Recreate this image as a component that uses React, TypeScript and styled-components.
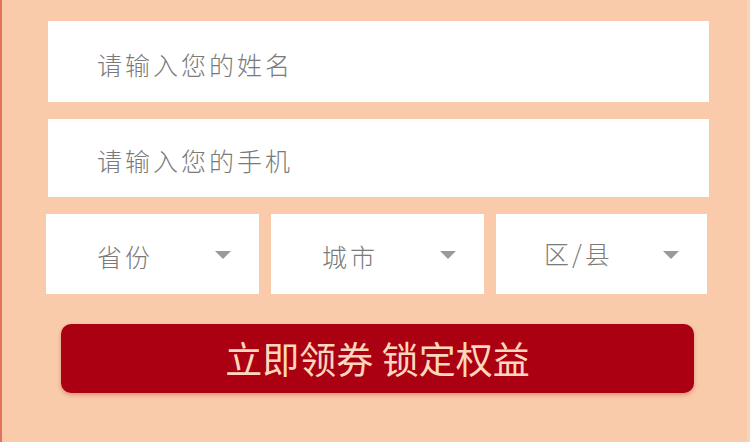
import React from "react";
import styled, { createGlobalStyle } from "styled-components";

const Global = createGlobalStyle`
  html, body { margin: 0; padding: 0; }
  body {
    width: 750px;
    height: 442px;
    overflow: hidden;
    background: #f9cbaa;
    font-family: "Noto Sans CJK SC", "Noto Sans", sans-serif;
  }
`;

const Page = styled.div`
  box-sizing: border-box;
  width: 750px;
  height: 442px;
  border-left: 2px solid #e2725e;
  border-right: 3px solid #fbd3b7;
  background: #f9cbaa;
  display: flex;
  flex-direction: column;
  padding: 21px 0 0 44px;
`;

const Field = styled.div`
  box-sizing: border-box;
  width: 661px;
  margin-left: 2px;
  height: ${(p: { h: number }) => p.h}px;
  background: #ffffff;
  display: flex;
  align-items: center;
  padding-left: 49px;
  padding-top: 4px;
  color: #7a7a7a;
  font-size: 25px;
  font-weight: 300;
  letter-spacing: 3px;
  margin-bottom: 17px;
`;

const SelectRow = styled.div`
  display: flex;
  gap: 12px;
  width: 661px;
`;

const Select = styled.div<{ w: number; pl: number }>`
  box-sizing: border-box;
  width: ${(p) => p.w}px;
  height: 80px;
  background: #ffffff;
  display: flex;
  align-items: center;
  justify-content: space-between;
  padding: 2px 28px 0 ${(p) => p.pl}px;
  color: #7a7a7a;
  font-size: 25px;
  font-weight: 300;
  letter-spacing: 3px;
`;

const Label = styled.span<{ dy: number }>`
  position: relative;
  top: ${(p) => p.dy}px;
`;

const Arrow = styled.span`
  width: 0;
  height: 0;
  border-left: 8px solid transparent;
  border-right: 8px solid transparent;
  border-top: 8px solid #9a9a9a;
`;

const Button = styled.button`
  box-sizing: border-box;
  margin: 30px 0 0 15px;
  width: 633px;
  height: 69px;
  border: none;
  border-radius: 10px;
  background: #ab0011;
  box-shadow: 0 2px 4px rgba(170, 40, 30, 0.35);
  color: #fcd6bd;
  font-family: "Noto Sans CJK SC", "Noto Sans", sans-serif;
  font-size: 37px;
  font-weight: 400;
  display: flex;
  align-items: center;
  justify-content: center;
  padding: 0 0 2px 0;
`;

export default function App() {
  return (
    <>
      <Global />
      <Page>
        <Field h={81}>请输入您的姓名</Field>
        <Field h={78}>请输入您的手机</Field>
        <SelectRow>
          <Select w={213} pl={51}>
            <Label dy={1}>省份</Label>
            <Arrow />
          </Select>
          <Select w={213} pl={51}>
            <Label dy={1}>城市</Label>
            <Arrow />
          </Select>
          <Select w={211} pl={48}>
            <Label dy={-2}>区/县</Label>
            <Arrow />
          </Select>
        </SelectRow>
        <Button>立即领券 锁定权益</Button>
      </Page>
    </>
  );
}
